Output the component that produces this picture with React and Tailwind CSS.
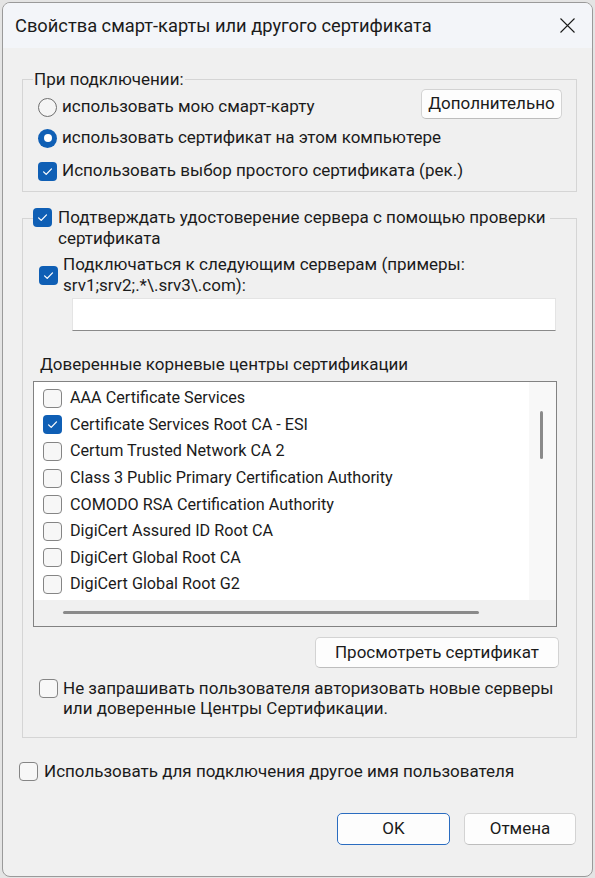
import React from "react";

function CheckBox({ checked }) {
  if (checked) {
    return (
      <span className="flex h-[19px] w-[19px] shrink-0 items-center justify-center rounded-[4px] bg-[#0f5fb5]">
        <svg width="13" height="13" viewBox="0 0 13 13" fill="none">
          <path d="M2.6 6.9 L5.2 9.4 L10.5 3.9" stroke="white" strokeWidth="1.3" strokeLinecap="round" strokeLinejoin="round" />
        </svg>
      </span>
    );
  }
  return <span className="block h-[19px] w-[19px] shrink-0 rounded-[4px] border border-[#858585] bg-[#f7f7f7]" />;
}

function Radio({ checked }) {
  if (checked) {
    return (
      <span className="flex h-[19px] w-[19px] shrink-0 items-center justify-center rounded-full bg-[#0f5fb5]">
        <span className="block h-[8px] w-[8px] rounded-full bg-white" />
      </span>
    );
  }
  return <span className="block h-[19px] w-[19px] shrink-0 rounded-full border border-[#6f6f6f] bg-[#f5f5f5]" />;
}

function Button({ children, className = "", primary = false }) {
  return (
    <div
      className={
        "flex items-center justify-center rounded-[5px] bg-[#fdfdfd] text-[17px] " +
        (primary
          ? "border-[1.5px] border-[#2a6cc0] "
          : "border border-[#d3d3d3] border-b-[#bdbdbd] ") +
        className
      }
    >
      {children}
    </div>
  );
}

const roots = [
  { name: "AAA Certificate Services", checked: false },
  { name: "Certificate Services Root CA - ESI", checked: true },
  { name: "Certum Trusted Network CA 2", checked: false },
  { name: "Class 3 Public Primary Certification Authority", checked: false },
  { name: "COMODO RSA Certification Authority", checked: false },
  { name: "DigiCert Assured ID Root CA", checked: false },
  { name: "DigiCert Global Root CA", checked: false },
  { name: "DigiCert Global Root G2", checked: false },
];

export default function App() {
  return (
    <div className="h-[878px] w-[595px] overflow-hidden bg-[#e4e4e4] pl-[2px] pt-[2px] font-['Roboto','Noto_Sans',sans-serif] text-[17px] text-[#1b1b1b]">
      <div className="flex h-[875px] w-[591px] flex-col overflow-hidden rounded-[8px] border border-[#9a9a9a] bg-[#f0f0f0]">
        {/* title bar */}
        <div className="flex h-[45px] shrink-0 items-center justify-between bg-[#f3f5f9] pl-[12px] pr-[17px]">
          <span className="text-[18.3px] leading-[24px]">Свойства смарт-карты или другого сертификата</span>
          <svg width="15" height="15" viewBox="0 0 15 15" fill="none">
            <path d="M0.5 0.5 L14.5 14.5 M14.5 0.5 L0.5 14.5" stroke="#1b1b1b" strokeWidth="1.1" />
          </svg>
        </div>

        {/* connection group */}
        <div className="ml-[19px] mr-[15px] mt-[31px] border border-[#d5d5d5] pb-[5px]">
          <div className="-mt-[12px] ml-[10px] w-fit bg-[#f0f0f0] px-[1px] leading-[22px]">При подключении:</div>
          <div className="-mt-[1px] flex items-start justify-between pr-[14px]">
            <label className="ml-[15px] mt-[3px] flex h-[30px] items-center gap-[5px]">
              <Radio checked={false} />
              <span>использовать мою смарт-карту</span>
            </label>
            <Button className="h-[30px] w-[141px]">Дополнительно</Button>
          </div>
          <label className="ml-[15px] mt-[1px] flex h-[30px] items-center gap-[5px]">
            <Radio checked />
            <span>использовать сертификат на этом компьютере</span>
          </label>
          <label className="ml-[15px] mt-[3px] flex h-[30px] items-center gap-[5px]">
            <CheckBox checked />
            <span>Использовать выбор простого сертификата (рек.)</span>
          </label>
        </div>

        {/* server validation group */}
        <div className="ml-[19px] mr-[15px] mt-[26px] flex flex-col border border-[#d5d5d5] pb-[19px]">
          <div className="-mt-[12px] ml-[10px] flex w-fit items-start gap-[6px] bg-[#f0f0f0] pr-[4px] leading-[21px]">
            <span className="mt-[1px] flex">
              <CheckBox checked />
            </span>
            <span>
              Подтверждать удостоверение сервера с помощью проверки
              <br />
              сертификата
            </span>
          </div>

          <div className="ml-[16px] mt-[5px] flex items-center gap-[5px] leading-[21px]">
            <CheckBox checked />
            <span>
              Подключаться к следующим серверам (примеры:
              <br />
              srv1;srv2;.*\.srv3\.com):
            </span>
          </div>

          <div className="ml-[49px] mt-[2px] h-[33px] w-[484px] border border-[#e4e4e4] border-b-[#8a8a8a] bg-white" />

          <div className="ml-[17px] mt-[23px] leading-[21px]">Доверенные корневые центры сертификации</div>

          {/* trusted roots list */}
          <div className="ml-[10px] mt-[6px] flex h-[246px] w-[524px] flex-col border border-[#828282] bg-white">
            <div className="flex flex-1">
              <div className="flex-1 pt-[3px]">
                {roots.map((r) => (
                  <div key={r.name} className="flex h-[26.6px] items-center gap-[8px] pl-[9px] text-[16.2px]">
                    <CheckBox checked={r.checked} />
                    <span className="whitespace-nowrap">{r.name}</span>
                  </div>
                ))}
              </div>
              <div className="w-[27px] bg-[#f8f8f8] pl-[11px] pt-[29px]">
                <div className="h-[48px] w-[3px] rounded-full bg-[#8a8a8a]" />
              </div>
            </div>
            <div className="flex h-[26px] shrink-0">
              <div className="flex-1 bg-[#f0f0f0] pl-[29px] pt-[11px]">
                <div className="h-[3px] w-[416px] rounded-full bg-[#8a8a8a]" />
              </div>
              <div className="w-[27px] bg-[#f0f0f0]" />
            </div>
          </div>

          <Button className="mr-[17px] mt-[10px] h-[31px] w-[244px] self-end">Просмотреть сертификат</Button>

          <div className="ml-[16px] mt-[10px] flex items-start gap-[5px] leading-[20px]">
            <span className="mt-[1px] flex">
              <CheckBox checked={false} />
            </span>
            <span>
              Не запрашивать пользователя авторизовать новые серверы
              <br />
              или доверенные Центры Сертификации.
            </span>
          </div>
        </div>

        <label className="ml-[16px] mt-[23px] flex h-[21px] items-center gap-[6px]">
          <CheckBox checked={false} />
          <span>Использовать для подключения другое имя пользователя</span>
        </label>

        <div className="mt-[31px] flex justify-end gap-[14px] pr-[16px]">
          <Button primary className="h-[32px] w-[113px]">OK</Button>
          <Button className="h-[32px] w-[112px]">Отмена</Button>
        </div>
      </div>
    </div>
  );
}
